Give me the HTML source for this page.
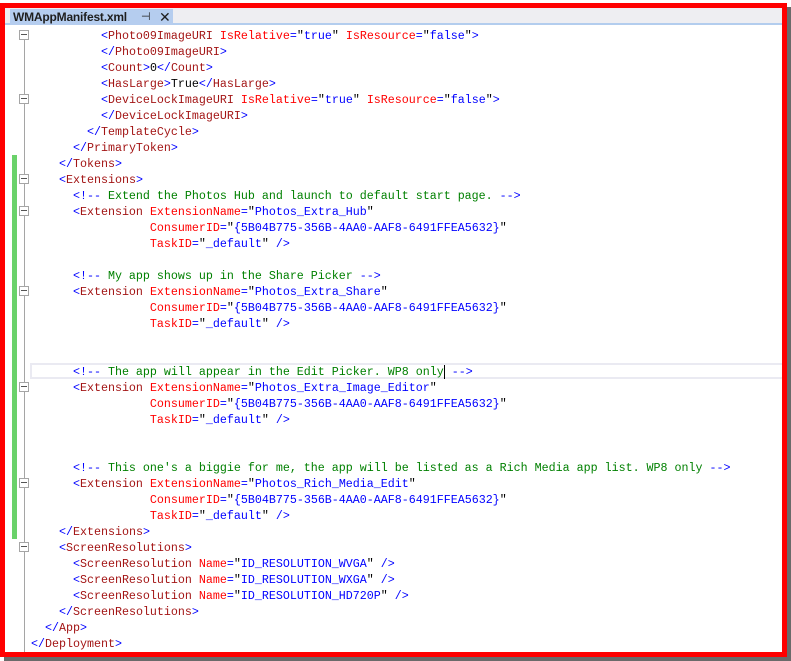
<!DOCTYPE html>
<html><head><style>
*{margin:0;padding:0;box-sizing:border-box}
body{width:791px;height:661px;background:#fff;position:relative;overflow:hidden}
.shadow{position:absolute;left:4px;top:7px;width:787px;height:654px;background:#6a6a6a}
.frame{position:absolute;left:0;top:3px;width:787px;height:654px;border:5px solid #f00;background:#fff;overflow:hidden}
.strip{position:absolute;left:0;top:0;width:777px;height:17px;background:#eeeef2;border-bottom:2px solid #b3cdee}
.tab{position:absolute;left:5px;top:1px;width:163px;height:16px;background:#b5cdef;font:bold 12px "Liberation Sans",sans-serif;color:#1e1e1e;padding-left:3px;line-height:16px;letter-spacing:-0.2px}
.tab .pin{position:absolute;left:131px;top:0;font-weight:normal;font-size:11px}
.tab .x{position:absolute;left:149px;top:0;font-weight:normal;font-size:14px}
.code{position:absolute;left:26px;top:20px;font:11.67px/16px "Liberation Mono",monospace;white-space:pre;color:#000}
.gl{position:absolute;left:19px;top:22px;width:1px;height:622px;background:#a5a5a5}
.green{position:absolute;left:7px;top:147px;width:5px;height:384px;background:#6ad26a}
.box{position:absolute;left:14px;width:10px;height:10px;border:1px solid #a5a5a5;background:#fff}
.box:after{content:"";position:absolute;left:1px;top:3px;width:6px;height:1px;background:#555}
.cur{position:absolute;left:25px;top:355px;width:760px;height:16px;border:2px solid #eaeaf2}
.b{color:#0000ff}.t{color:#a31515}.a{color:#ff0000}.c{color:#008000}
</style></head><body>
<div class="shadow"></div>
<div class="frame">
<div class="strip"><div class="tab">WMAppManifest.xml<span class="pin">⊣</span><span class="x">✕</span></div></div>
<div class="gl"></div>
<div class="green"></div>
<div class="cur"></div>
<div class="box" style="top:22px"></div>
<div class="box" style="top:86px"></div>
<div class="box" style="top:166px"></div>
<div class="box" style="top:198px"></div>
<div class="box" style="top:278px"></div>
<div class="box" style="top:374px"></div>
<div class="box" style="top:470px"></div>
<div class="box" style="top:534px"></div>
<div class="code"><span class="b">          &lt;</span><span class="t">Photo09ImageURI</span> <span class="a">IsRelative</span><span class="b">=</span>"<span class="b">true</span>" <span class="a">IsResource</span><span class="b">=</span>"<span class="b">false</span>"<span class="b">&gt;</span>
<span class="b">          &lt;/</span><span class="t">Photo09ImageURI</span><span class="b">&gt;</span>
<span class="b">          &lt;</span><span class="t">Count</span><span class="b">&gt;</span>0<span class="b">&lt;/</span><span class="t">Count</span><span class="b">&gt;</span>
<span class="b">          &lt;</span><span class="t">HasLarge</span><span class="b">&gt;</span>True<span class="b">&lt;/</span><span class="t">HasLarge</span><span class="b">&gt;</span>
<span class="b">          &lt;</span><span class="t">DeviceLockImageURI</span> <span class="a">IsRelative</span><span class="b">=</span>"<span class="b">true</span>" <span class="a">IsResource</span><span class="b">=</span>"<span class="b">false</span>"<span class="b">&gt;</span>
<span class="b">          &lt;/</span><span class="t">DeviceLockImageURI</span><span class="b">&gt;</span>
<span class="b">        &lt;/</span><span class="t">TemplateCycle</span><span class="b">&gt;</span>
<span class="b">      &lt;/</span><span class="t">PrimaryToken</span><span class="b">&gt;</span>
<span class="b">    &lt;/</span><span class="t">Tokens</span><span class="b">&gt;</span>
<span class="b">    &lt;</span><span class="t">Extensions</span><span class="b">&gt;</span>
<span class="b">      &lt;!--</span><span class="c"> Extend the Photos Hub and launch to default start page. </span><span class="b">--&gt;</span>
<span class="b">      &lt;</span><span class="t">Extension</span> <span class="a">ExtensionName</span><span class="b">=</span>"<span class="b">Photos_Extra_Hub</span>"
                 <span class="a">ConsumerID</span><span class="b">=</span>"<span class="b">{5B04B775-356B-4AA0-AAF8-6491FFEA5632}</span>"
                 <span class="a">TaskID</span><span class="b">=</span>"<span class="b">_default</span>" <span class="b">/&gt;</span>

<span class="b">      &lt;!--</span><span class="c"> My app shows up in the Share Picker </span><span class="b">--&gt;</span>
<span class="b">      &lt;</span><span class="t">Extension</span> <span class="a">ExtensionName</span><span class="b">=</span>"<span class="b">Photos_Extra_Share</span>"
                 <span class="a">ConsumerID</span><span class="b">=</span>"<span class="b">{5B04B775-356B-4AA0-AAF8-6491FFEA5632}</span>"
                 <span class="a">TaskID</span><span class="b">=</span>"<span class="b">_default</span>" <span class="b">/&gt;</span>


<span class="b">      &lt;!--</span><span class="c"> The app will appear in the Edit Picker. WP8 only</span><span style="border-left:1px solid #000"> </span><span class="b">--&gt;</span>
<span class="b">      &lt;</span><span class="t">Extension</span> <span class="a">ExtensionName</span><span class="b">=</span>"<span class="b">Photos_Extra_Image_Editor</span>"
                 <span class="a">ConsumerID</span><span class="b">=</span>"<span class="b">{5B04B775-356B-4AA0-AAF8-6491FFEA5632}</span>"
                 <span class="a">TaskID</span><span class="b">=</span>"<span class="b">_default</span>" <span class="b">/&gt;</span>


<span class="b">      &lt;!--</span><span class="c"> This one's a biggie for me, the app will be listed as a Rich Media app list. WP8 only </span><span class="b">--&gt;</span>
<span class="b">      &lt;</span><span class="t">Extension</span> <span class="a">ExtensionName</span><span class="b">=</span>"<span class="b">Photos_Rich_Media_Edit</span>"
                 <span class="a">ConsumerID</span><span class="b">=</span>"<span class="b">{5B04B775-356B-4AA0-AAF8-6491FFEA5632}</span>"
                 <span class="a">TaskID</span><span class="b">=</span>"<span class="b">_default</span>" <span class="b">/&gt;</span>
<span class="b">    &lt;/</span><span class="t">Extensions</span><span class="b">&gt;</span>
<span class="b">    &lt;</span><span class="t">ScreenResolutions</span><span class="b">&gt;</span>
<span class="b">      &lt;</span><span class="t">ScreenResolution</span> <span class="a">Name</span><span class="b">=</span>"<span class="b">ID_RESOLUTION_WVGA</span>" <span class="b">/&gt;</span>
<span class="b">      &lt;</span><span class="t">ScreenResolution</span> <span class="a">Name</span><span class="b">=</span>"<span class="b">ID_RESOLUTION_WXGA</span>" <span class="b">/&gt;</span>
<span class="b">      &lt;</span><span class="t">ScreenResolution</span> <span class="a">Name</span><span class="b">=</span>"<span class="b">ID_RESOLUTION_HD720P</span>" <span class="b">/&gt;</span>
<span class="b">    &lt;/</span><span class="t">ScreenResolutions</span><span class="b">&gt;</span>
<span class="b">  &lt;/</span><span class="t">App</span><span class="b">&gt;</span>
<span class="b">&lt;/</span><span class="t">Deployment</span><span class="b">&gt;</span></div>
</div>
</body></html>
